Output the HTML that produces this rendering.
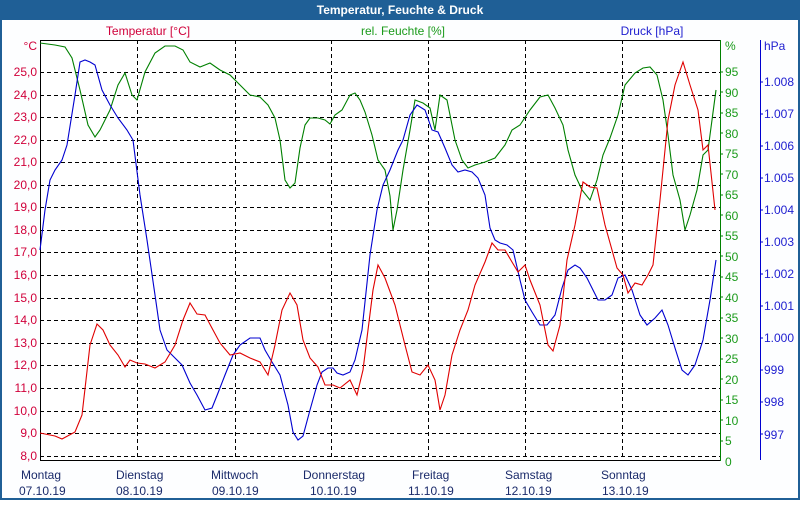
<!DOCTYPE html>
<html><head><meta charset="utf-8"><style>
body{margin:0;width:800px;height:500px;overflow:hidden;background:#fff;font-family:"Liberation Sans",sans-serif}
</style></head><body>
<svg width="800" height="500" xmlns="http://www.w3.org/2000/svg" font-family="Liberation Sans, sans-serif" font-size="12">
<rect x="0" y="0" width="800" height="500" fill="#1f5f96"/>
<rect x="2" y="20" width="796" height="478" fill="#fdfeff"/>
<text x="400" y="14" fill="#fff" font-weight="bold" text-anchor="middle">Temperatur, Feuchte &amp; Druck</text>
<text x="148" y="35" fill="#d0003a" text-anchor="middle">Temperatur [°C]</text>
<text x="403" y="35" fill="#1a9a1a" text-anchor="middle">rel. Feuchte [%]</text>
<text x="652" y="35" fill="#2020d0" text-anchor="middle">Druck [hPa]</text>
<rect x="40" y="40" width="680" height="420" fill="#fff"/>
<g stroke="#000" stroke-dasharray="4,3" stroke-width="1">
<path d="M40 72.5H720M40 95.5H720M40 117.5H720M40 140.5H720M40 162.5H720M40 185.5H720M40 207.5H720M40 230.5H720M40 252.5H720M40 275.5H720M40 298.5H720M40 320.5H720M40 343.5H720M40 365.5H720M40 388.5H720M40 411.5H720M40 433.5H720M40 456.5H720"/>
<path d="M137.5 40V460M235.5 40V460M331.5 40V460M428.5 40V460M525.5 40V460M622.5 40V460"/>
</g>
<path d="M40 40.5H720M40.5 40V461M40 460.5H720" stroke="#000" fill="none"/>
<path d="M720.5 40V461" stroke="#008000"/>
<path d="M760.5 40V460" stroke="#0000d0"/>
<g fill="#d0003a" text-anchor="end">
<text x="37" y="50">°C</text><text x="37" y="76">25,0</text><text x="37" y="99">24,0</text><text x="37" y="121">23,0</text><text x="37" y="144">22,0</text><text x="37" y="166">21,0</text><text x="37" y="189">20,0</text><text x="37" y="211">19,0</text><text x="37" y="234">18,0</text><text x="37" y="256">17,0</text><text x="37" y="279">16,0</text><text x="37" y="302">15,0</text><text x="37" y="324">14,0</text><text x="37" y="347">13,0</text><text x="37" y="369">12,0</text><text x="37" y="392">11,0</text><text x="37" y="415">10,0</text><text x="37" y="437">9,0</text><text x="37" y="460">8,0</text>
</g>
<g fill="#1a9a1a"><text x="725" y="50">%</text>
<text x="725" y="76">95</text><text x="725" y="97">90</text><text x="725" y="117">85</text><text x="725" y="138">80</text><text x="725" y="158">75</text><text x="725" y="179">70</text><text x="725" y="199">65</text><text x="725" y="220">60</text><text x="725" y="240">55</text><text x="725" y="261">50</text><text x="725" y="281">45</text><text x="725" y="302">40</text><text x="725" y="322">35</text><text x="725" y="343">30</text><text x="725" y="363">25</text><text x="725" y="384">20</text><text x="725" y="404">15</text><text x="725" y="425">10</text><text x="725" y="445">5</text><text x="725" y="466">0</text></g>
<g stroke="#008000"><path d="M720 72h3M720 92h3M720 113h3M720 133h3M720 154h3M720 174h3M720 195h3M720 215h3M720 236h3M720 256h3M720 277h3M720 297h3M720 318h3M720 338h3M720 359h3M720 379h3M720 400h3M720 420h3M720 441h3"/></g>
<g fill="#2020d0"><text x="764" y="50">hPa</text><text x="764" y="86">1.008</text><text x="764" y="118">1.007</text><text x="764" y="150">1.006</text><text x="764" y="182">1.005</text><text x="764" y="214">1.004</text><text x="764" y="246">1.003</text><text x="764" y="278">1.002</text><text x="764" y="310">1.001</text><text x="764" y="342">1.000</text><text x="764" y="374">999</text><text x="764" y="406">998</text><text x="764" y="439">997</text></g>
<g stroke="#0000d0"><path d="M760 82h3M760 114h3M760 146h3M760 178h3M760 210h3M760 242h3M760 274h3M760 306h3M760 338h3M760 370h3M760 402h3M760 434h3"/></g>
<g fill="#1a2a6a">
<text x="21" y="479">Montag</text><text x="19" y="495">07.10.19</text>
<text x="116" y="479">Dienstag</text><text x="116" y="495">08.10.19</text>
<text x="211" y="479">Mittwoch</text><text x="212" y="495">09.10.19</text>
<text x="303" y="479">Donnerstag</text><text x="310" y="495">10.10.19</text>
<text x="412" y="479">Freitag</text><text x="408" y="495">11.10.19</text>
<text x="505" y="479">Samstag</text><text x="505" y="495">12.10.19</text>
<text x="601" y="479">Sonntag</text><text x="602" y="495">13.10.19</text>
</g>
<g fill="none" stroke-width="1.1">
<polyline stroke="#008000" points="40,43 55,45 65,47 72,58 80,90 88,125 95,137 100,130 110,110 118,85 125,73 132,95 137,100 145,72 155,53 165,46 175,46 183,50 190,62 200,67 210,63 220,70 230,75 240,85 250,95 260,97 268,105 275,118 280,140 285,180 290,188 295,183 300,148 305,125 310,118 318,118 325,120 330,124 335,115 342,110 350,95 355,93 360,100 365,112 372,135 378,160 385,170 390,196 393,230 397,210 403,170 410,130 415,100 423,103 430,108 435,130 440,95 447,100 455,140 462,160 468,168 475,165 485,162 495,158 505,145 512,130 520,125 530,110 540,97 548,95 555,108 563,125 568,150 575,175 582,190 590,200 597,180 603,155 610,138 618,115 625,85 635,73 643,68 650,67 657,75 663,100 668,135 673,175 680,200 685,230 690,215 697,190 703,155 708,150 712,120 716,90"/>
<polyline stroke="#0000d0" points="40,250 45,210 50,180 55,170 62,160 67,145 75,95 80,62 85,60 90,62 95,65 102,90 110,105 118,118 127,130 133,140 140,195 147,240 155,295 160,330 167,350 175,358 182,365 190,383 197,395 205,410 212,408 218,393 225,375 233,355 240,345 250,338 260,338 265,350 272,362 280,375 288,405 293,432 298,440 303,436 310,410 317,385 322,372 328,368 333,368 337,373 343,375 350,372 355,360 362,330 370,255 377,210 383,185 390,170 398,150 403,140 410,115 417,105 425,110 432,130 438,132 445,148 452,165 458,172 465,170 472,172 478,178 485,195 490,228 495,240 500,243 507,245 513,250 520,280 525,300 532,312 540,325 547,325 555,315 562,288 568,270 575,265 580,268 587,278 593,290 598,300 605,300 612,295 618,278 625,275 632,290 640,315 647,325 655,318 662,310 668,325 675,348 682,370 688,375 695,365 703,340 710,300 716,260"/>
<polyline stroke="#e00000" points="40,433 55,436 62,439 75,432 82,415 90,345 97,324 103,330 110,345 118,355 125,367 130,360 137,363 145,364 155,368 165,362 175,345 183,320 190,303 197,314 205,315 213,330 220,343 230,355 240,353 250,358 260,362 268,375 275,345 282,310 290,293 297,305 303,340 310,358 318,367 325,385 333,385 340,388 350,380 357,395 363,370 368,330 373,290 378,265 385,278 395,305 405,345 412,372 420,375 428,365 435,380 440,410 445,395 452,355 460,330 468,310 475,285 485,262 492,243 498,250 505,250 512,262 518,272 525,265 530,280 540,305 548,345 553,351 560,325 567,260 575,225 583,182 590,187 597,188 605,225 612,250 617,268 623,275 628,293 635,283 642,285 648,275 653,265 660,200 668,120 675,85 683,62 690,85 698,110 703,150 708,145 715,210"/>
</g>
</svg>
</body></html>
